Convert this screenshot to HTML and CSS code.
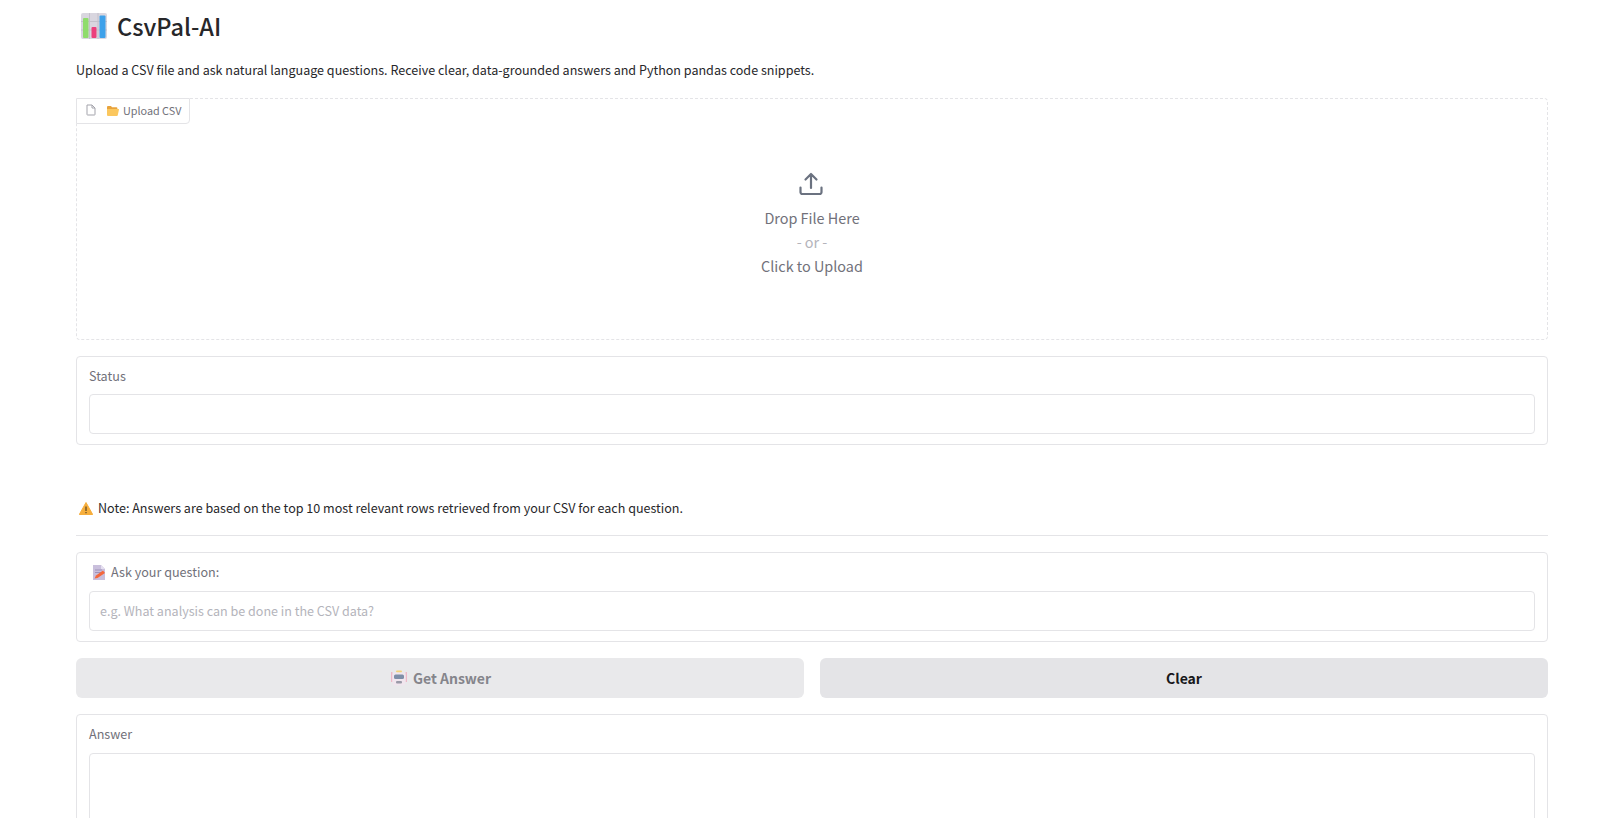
FILE: index.html
```html
<!DOCTYPE html>
<html lang="en">
<head>
<meta charset="utf-8">
<title>CsvPal-AI</title>
<link rel="stylesheet" href="styles.css">
</head>
<body>
<main class="app">
  <h1 class="title">
    <svg class="title-icon" viewBox="0 0 26 26" aria-hidden="true">
      <rect x="0" y="0" width="26" height="26" rx="2" fill="#d9d6df"/>
      <path d="M8.5 0v26M17 0v26M0 8.5h26M0 17h26" stroke="#c4c1cb" stroke-width="1"/>
      <rect x="2" y="5" width="5.5" height="20" rx="1" fill="#8fdc6c"/>
      <rect x="10.5" y="14" width="5" height="11" rx="1" fill="#ec3f7c"/>
      <rect x="18.5" y="2.5" width="6" height="22.5" rx="1" fill="#3ea1ea"/>
    </svg>
    <span>CsvPal-AI</span>
  </h1>
  <p class="intro">Upload a CSV file and ask natural language questions. Receive clear, data-grounded answers and Python pandas code snippets.</p>

  <section class="upload">
    <div class="upload-label">
      <svg class="file-icon" viewBox="0 0 10 12" aria-hidden="true"><path d="M1 1h5l3 3v6.500a.5.5 0 0 1-.5.5h-7a.5.5 0 0 1-.5-.5z M6 1v3h3" fill="none" stroke="#a3a3ab" stroke-width="1" stroke-linejoin="round"/></svg>
      <svg class="folder-icon" viewBox="0 0 12 11" aria-hidden="true"><path d="M0 2a1 1 0 0 1 1-1h3l1 1.200h4.400a1 1 0 0 1 1 1V4H0z" fill="#e8a33c"/><path d="M0 4h11.600a.4.4 0 0 1 .4.5L10.800 10a1 1 0 0 1-1 1H1a1 1 0 0 1-1-1z" fill="#fbc75e"/></svg>
      <span>Upload CSV</span>
    </div>
    <div class="drop">
      <svg class="upload-icon" viewBox="0 0 24 24" aria-hidden="true"><path d="M1.500 15.500v4.700a1.800 1.800 0 0 0 1.800 1.800h17.400a1.800 1.800 0 0 0 1.800-1.800v-4.700M12 16V2M6.500 7.500 12 2l5.500 5.500" fill="none" stroke="#6b7280" stroke-width="2.200" stroke-linecap="round" stroke-linejoin="round"/></svg>
      <div class="drop-line">Drop File Here</div>
      <div class="drop-or">- or -</div>
      <div class="drop-line">Click to Upload</div>
    </div>
  </section>

  <section class="field field-status">
    <label class="field-label">Status</label>
    <div class="input"></div>
  </section>

  <p class="note">
    <svg class="note-icon" viewBox="0 0 14 13" aria-hidden="true"><path d="M7 .5 13.700 12.500H.3z" fill="#f6ae3c" stroke="#f6ae3c" stroke-linejoin="round"/><path d="M7 4.500v4.500M7 10v1.300" stroke="#4a3a20" stroke-width="1.100"/></svg>
    <span>Note: Answers are based on the top 10 most relevant rows retrieved from your CSV for each question.</span>
  </p>
  <hr class="rule">

  <section class="field field-question">
    <label class="field-label">
      <svg class="memo-icon" viewBox="0 0 14 15" aria-hidden="true"><path d="M1 0h8l4 4v11H1z" fill="#c9bfdc"/><path d="M9 0l4 4H9z" fill="#e5dff0"/><path d="M3 5h7M3 7.500h7" stroke="#9f92b8" stroke-width="1"/><path d="M2.500 13.500 4 10.500l7-5 2 2.500-7.500 5z" fill="#f4683c"/></svg>
      <span>Ask your question:</span>
    </label>
    <div class="input input-placeholder">e.g. What analysis can be done in the CSV data?</div>
  </section>

  <div class="actions">
    <button class="btn btn-disabled" type="button">
      <svg class="bot-icon" viewBox="0 0 16 16" aria-hidden="true"><path d="M.8 2v10M15.200 2v10" stroke="#f0a3b8" stroke-width="1"/><rect x="5" y=".5" width="6" height="2" rx="1" fill="#f3d27a"/><rect x="1.500" y="2.500" width="13" height="13" rx="3" fill="#f1e6ee"/><rect x="3" y="4.500" width="10" height="4.500" rx="1.500" fill="#7f8fa8"/><rect x="5" y="11" width="6" height="2.500" rx="1" fill="#9a9aa8"/></svg>
      <span>Get Answer</span>
    </button>
    <button class="btn btn-clear" type="button">Clear</button>
  </div>

  <section class="field field-answer">
    <label class="field-label">Answer</label>
    <div class="input input-tall"></div>
  </section>
</main>
</body>
</html>
```

FILE: styles.css
```css
* { box-sizing: border-box; }
html, body { margin: 0; height: 818px; overflow: hidden; background: #fff; }
body { font-family: "Noto Sans CJK SC", "Noto Sans", sans-serif; color: #27272a; }

.app { width: 1472px; margin-left: 76px; display: flex; flex-direction: column; }

.title { display: flex; align-items: center; gap: 10px; margin: 0; padding: 12px 0 0 5px; height: 40px; font-size: 23.5px; line-height: 28px; font-weight: 500; color: #27272a; }
.title-icon { width: 26px; height: 26px; }

.intro { margin: 20px 0 0; font-size: 12.55px; line-height: 20px; color: #27272a; }

.upload { position: relative; height: 242px; margin-top: 18px; border: 1px dashed #e4e4e7; border-radius: 4px; }
.upload-label { position: absolute; left: -1px; top: -1px; height: 26px; width: 114px; padding: 0 0 2px 9px; display: flex; align-items: center; font-size: 10.8px; color: #71717a; background: #fff; border: 1px solid #e4e4e7; border-radius: 0 0 4px 0; }
.file-icon { width: 10px; height: 12px; margin-right: 11px; }
.folder-icon { width: 12px; height: 11px; margin-right: 4px; }
.drop { height: 100%; display: flex; flex-direction: column; align-items: center; padding-top: 73px; font-size: 14.4px; color: #71717a; }
.upload-icon { width: 24px; height: 24px; margin: 0 3px 10px 0; }
.drop-line { line-height: 24px; }
.drop-or { line-height: 24px; color: #b4b4bb; }

.field { margin-top: 16px; border: 1px solid #e4e4e7; border-radius: 4px; padding: 9px 12px 0; }
.field-status { height: 89px; }
.field-question { height: 90px; margin-top: 16px; }
.field-answer { height: 200px; margin-top: 16px; }
.field-label { display: flex; align-items: center; height: 20px; font-size: 12.6px; line-height: 20px; color: #71717a; }
.input { margin-top: 8px; height: 40px; border: 1px solid #e4e4e7; border-radius: 4px; background: #fff; }
.field-question .input, .field-answer .input { margin-top: 9px; }
.input-placeholder { padding: 0 10px; font-size: 12.55px; line-height: 38px; color: #b4b4bb; }
.input-tall { height: 200px; }
.memo-icon { width: 14px; height: 15px; margin: 0 5px 0 3px; }

.note { display: flex; align-items: center; gap: 5px; margin: 53px 0 0; font-size: 12.55px; line-height: 20px; color: #27272a; }
.note-icon { width: 14px; height: 13px; margin-left: 3px; }
.rule { width: 100%; height: 1px; margin: 17px 0 0; border: 0; background: #e4e4e7; }

.actions { display: grid; grid-template-columns: 1fr 1fr; gap: 16px; margin-top: 16px; }
.btn { height: 40px; border: 0; border-radius: 6px; display: flex; align-items: center; justify-content: center; gap: 6px; font: 600 14px/20px "Noto Sans CJK SC", "Noto Sans", sans-serif; }
.btn-disabled { padding-left: 8px; background: #e9e9eb; color: #85858b; }
.btn-clear { background: #e4e4e7; color: #18181b; }
.bot-icon { width: 16px; height: 16px; }
```
